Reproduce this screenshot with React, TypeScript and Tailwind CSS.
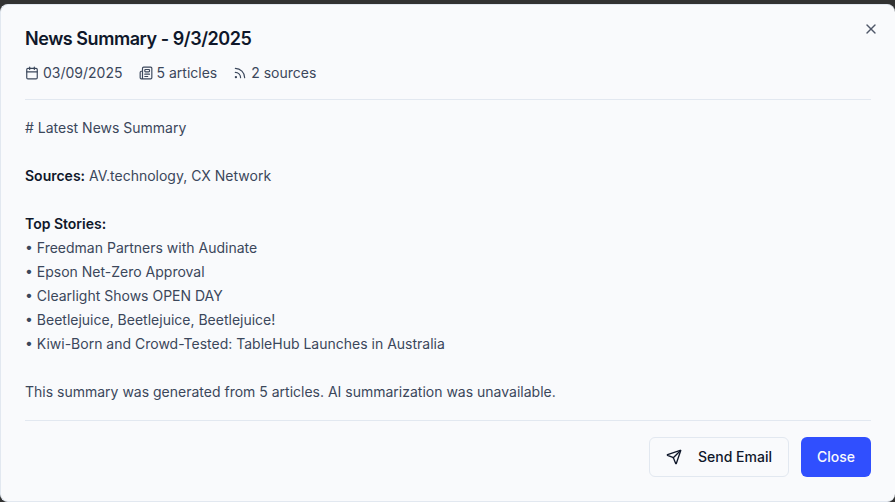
import { Calendar, Newspaper, Rss, Send, X } from "lucide-react";

const stories = [
  "Freedman Partners with Audinate",
  "Epson Net-Zero Approval",
  "Clearlight Shows OPEN DAY",
  "Beetlejuice, Beetlejuice, Beetlejuice!",
  "Kiwi-Born and Crowd-Tested: TableHub Launches in Australia",
];

export default function App() {
  return (
    <div className="min-h-screen bg-[#323232] pt-1 font-['Inter',sans-serif]">
      <div
        role="dialog"
        aria-labelledby="summary-title"
        className="relative rounded-lg border border-r-0 border-[#e2e8f0] bg-[#f9fafc] p-6 text-sm text-[#3b475b]"
      >
        <button
          type="button"
          aria-label="Close dialog"
          className="absolute top-4 right-4 text-[#4f5768]"
        >
          <X className="size-4" />
        </button>
        <header className="border-b border-[#e2e8f0] pb-4">
          <h2
            id="summary-title"
            className="text-lg leading-5 font-semibold tracking-tight text-[#0f172a]"
          >
            News Summary - 9/3/2025
          </h2>
          <div className="mt-3.5 flex items-center gap-4">
            <span className="flex items-center gap-1">
              <Calendar className="size-3.5" />
              03/09/2025
            </span>
            <span className="flex items-center gap-1">
              <Newspaper className="size-3.5" />5 articles
            </span>
            <span className="flex items-center gap-1">
              <Rss className="size-3.5" />2 sources
            </span>
          </div>
        </header>
        <div className="py-4 leading-6">
          <p># Latest News Summary</p>
          <p className="mt-6">
            <strong className="font-semibold text-[#0f172a]">Sources:</strong>{" "}
            AV.technology, CX Network
          </p>
          <p className="mt-6">
            <strong className="font-semibold text-[#0f172a]">Top Stories:</strong>
          </p>
          {stories.map((story) => (
            <p key={story}>• {story}</p>
          ))}
          <p className="mt-6">
            This summary was generated from 5 articles. AI summarization was
            unavailable.
          </p>
        </div>
        <footer className="flex justify-end gap-3 border-t border-[#e2e8f0] pt-4">
          <button
            type="button"
            className="flex h-10 items-center gap-4 rounded-md border border-[#e2e8f0] bg-[#f9fafc] px-4 font-medium text-[#0f172a]"
          >
            <Send className="size-4" />
            Send Email
          </button>
          <button
            type="button"
            className="h-10 rounded-md bg-[#304ffe] px-4 font-medium text-[#f8fafc]"
          >
            Close
          </button>
        </footer>
      </div>
    </div>
  );
}
